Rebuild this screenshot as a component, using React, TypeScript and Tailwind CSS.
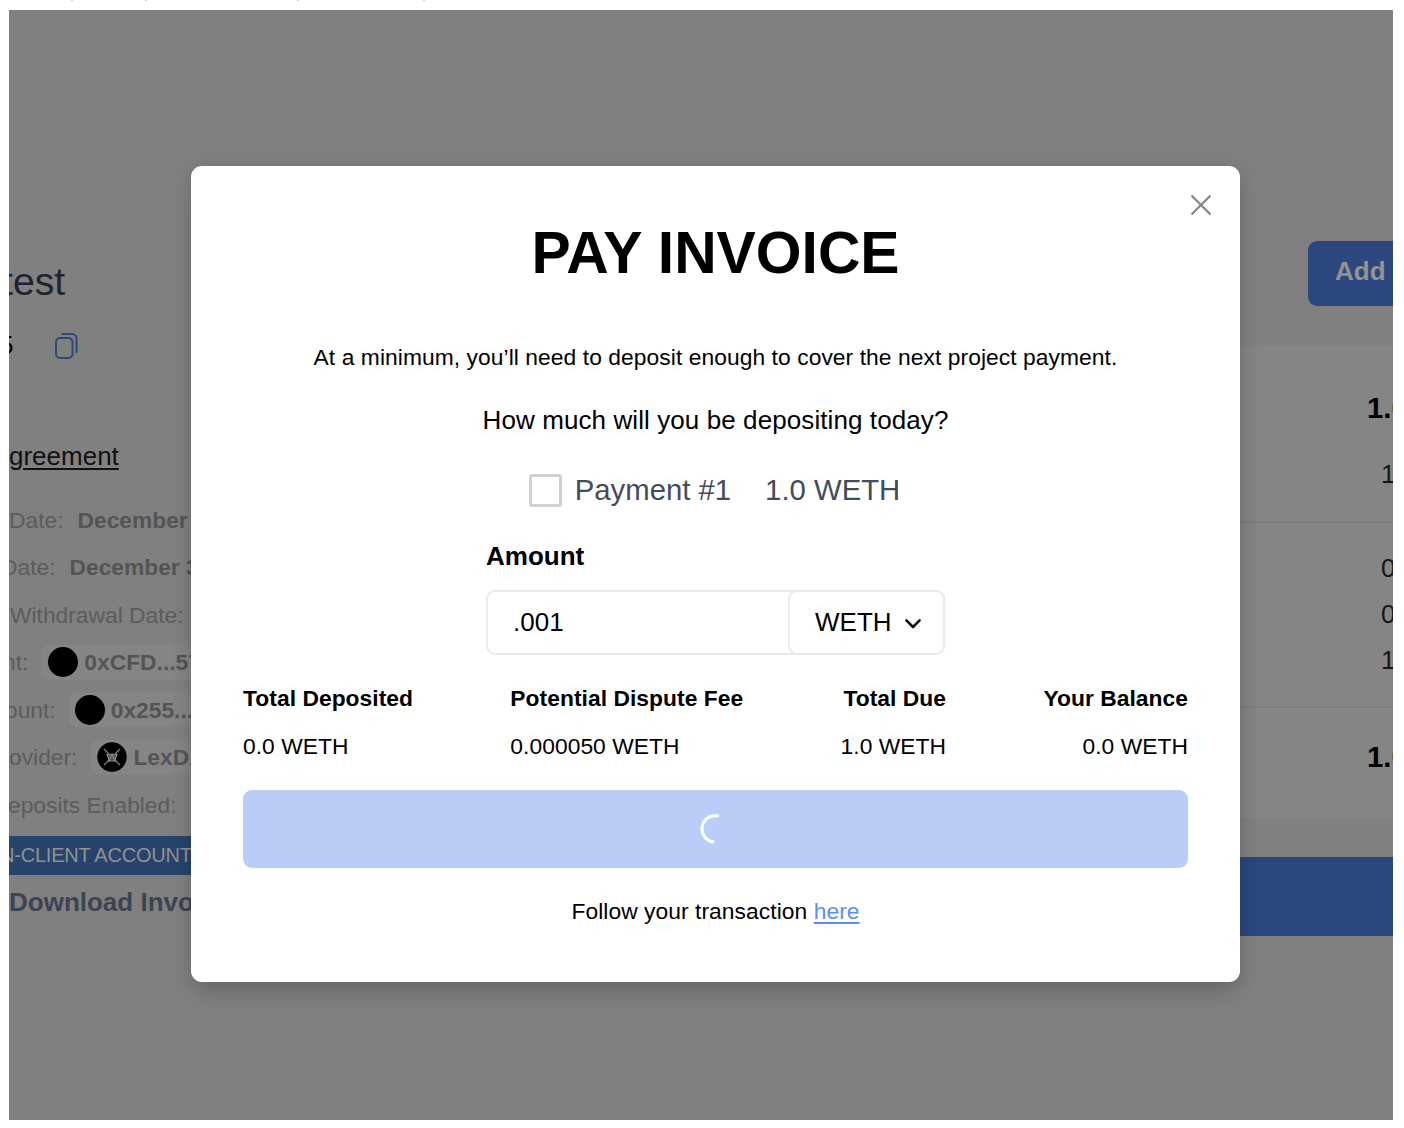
import React from "react";

const descenders = ["ml-[71px]", "ml-[72px]", "ml-[150px]", "ml-[124px]"];

function LexMark() {
  return (
    <svg viewBox="0 0 30 30" className="size-[30px] shrink-0">
      <circle cx="15" cy="15" r="14.7" fill="#000" />
      <g stroke="#858585" strokeWidth="1.2" fill="none">
        <path d="M7 7 23 23M23 7 7 23" />
        <path d="M10 12.5h10l-2.5 6.5h-5z" fill="#555" />
        <path d="M11.5 20 15 12l3.5 8" />
      </g>
    </svg>
  );
}

function DetailRow({ indent, label, children }: { indent: string; label: string; children?: React.ReactNode }) {
  return (
    <div className="flex h-[47.5px] items-center">
      <span className={indent}>{label}</span>
      {children}
    </div>
  );
}

function Pill({ icon, children, className }: { icon: React.ReactNode; children: string; className: string }) {
  return (
    <span className={`flex h-[35px] items-center gap-[6px] rounded-[7px] bg-[#858585] pl-[6px] pr-3 font-bold text-[#545454] ${className}`}>
      {icon}
      {children}
    </span>
  );
}

function Backdrop() {
  const dot = <span className="size-[30px] shrink-0 rounded-full bg-black" />;
  return (
    <div className="flex h-full justify-between">
      <div className="w-[400px] whitespace-nowrap pt-[247px]">
        <div className="-ml-[7px] h-[50px] text-[39.2px] leading-[50px] text-[#1f242e]">test</div>
        <div className="mt-[18px] flex h-10 items-center text-[26px] text-black">
          <span className="-ml-[10px]">5</span>
          <svg viewBox="0 0 24 28" className="ml-[41px] mt-px h-7 w-6" fill="none" stroke="#2b4a7a" strokeWidth="2">
            <rect x="2" y="6" width="16.5" height="20" rx="4" />
            <path d="M7.5 2h10.5a4.5 4.5 0 0 1 4.5 4.5v14.5" />
          </svg>
        </div>
        <div className="mt-[71px] h-10 text-[26px] leading-10 text-[#111] underline decoration-2 underline-offset-[3px]">greement</div>
        <div className="mt-[20px] text-[22.8px] text-[#5c5c5c]">
          <DetailRow indent="" label="Date:"><b className="ml-[14px] text-[#545454]">December 30</b></DetailRow>
          <DetailRow indent="-ml-[8px]" label="Date:"><b className="ml-[14px] text-[#545454]">December 31</b></DetailRow>
          <DetailRow indent="ml-px" label="Withdrawal Date:" />
          <DetailRow indent="-ml-[6px]" label="nt:"><Pill className="ml-[14px]" icon={dot}>0xCFD...57</Pill></DetailRow>
          <DetailRow indent="-ml-[4px]" label="ount:"><Pill className="ml-[13px]" icon={dot}>0x255...</Pill></DetailRow>
          <DetailRow indent="" label="ovider:"><Pill className="ml-[14px]" icon={<LexMark />}>LexDAO</Pill></DetailRow>
          <DetailRow indent="-ml-px" label="eposits Enabled:" />
        </div>
        <div className="mt-[7px] h-[39px] bg-[#27446a] text-[20px] leading-[39px] text-[#929292]">
          <span className="-ml-[9px] tracking-[-0.22px]">N-CLIENT ACCOUNT</span>
        </div>
        <div className="mt-[7px] h-10 text-[26px] font-bold leading-10 text-[#3b4453]">Download Invoice</div>
      </div>

      <div className="w-[400px] whitespace-nowrap pt-[231px]">
        <div className="ml-[315px] h-[65px] rounded-l-[9px] bg-[#2b477e] pl-[27px] text-[26px] font-bold leading-[61px] text-[#929292]">Add</div>
        <div className="mt-[39px] h-[473px] bg-[#858585] text-[26px] text-[#151515]">
          <div className="flex h-[178px] flex-col border-b-2 border-[#7b7e80] pt-[43px]">
            <b className="h-10 pl-[374px] text-[29.3px] leading-10 text-black">1.0</b>
            <span className="mt-[26px] pl-[388px] leading-10">1.0</span>
          </div>
          <div className="flex h-[185px] flex-col border-b-2 border-[#7d7d7d] pt-[22px] leading-[46px]">
            <span className="pl-[388px]">0.0</span>
            <span className="pl-[388px]">0.0</span>
            <span className="pl-[388px]">1.0</span>
          </div>
          <b className="block pl-[374px] pt-[29px] text-[29.3px] leading-10 text-black">1.0</b>
        </div>
        <div className="mt-[39px] h-[79px] bg-[#2b477e]" />
      </div>
    </div>
  );
}

const totals = [
  { label: "Total Deposited", value: "0.0 WETH", align: "" },
  { label: "Potential Dispute Fee", value: "0.000050 WETH", align: "" },
  { label: "Total Due", value: "1.0 WETH", align: "text-right" },
  { label: "Your Balance", value: "0.0 WETH", align: "text-right" },
];

function PayInvoiceDialog() {
  return (
    <div role="dialog" className="absolute left-[182px] top-[156px] flex h-[815.5px] w-[1049px] flex-col items-center rounded-[11px] bg-white pt-[52px] text-black shadow-[0_16px_24px_-5px_rgba(0,0,0,0.1),0_4px_20px_rgba(0,0,0,0.14)]">
      <button aria-label="Close" className="absolute right-[28px] top-[28px]">
        <svg viewBox="0 0 22 22" className="size-[22px]" stroke="#858585" strokeWidth="2.2" fill="none">
          <path d="M1.5 1.5 20.5 20.5M20.5 1.5 1.5 20.5" />
        </svg>
      </button>
      <h1 className="h-[70px] text-[58.8px] font-bold leading-[70px]">PAY INVOICE</h1>
      <p className="mt-[51px] h-9 text-[22.8px] leading-9 tracking-[0.07px]">At a minimum, you’ll need to deposit enough to cover the next project payment.</p>
      <p className="mt-[25px] h-10 text-[26px] leading-10 tracking-[0.09px]">How much will you be depositing today?</p>
      <div className="mt-8 flex h-9 items-center text-[29.3px] text-[#434c5a]">
        <span className="-ml-[2px] size-[33px] rounded-[3px] border-[3px] border-[#d0d0d0]" />
        <span className="ml-[13px]">Payment #1</span>
        <span className="ml-[34px]">1.0 WETH</span>
      </div>
      <div className="mt-[30px] w-[459px]">
        <label className="block h-9 text-[26px] font-bold leading-9">Amount</label>
        <div className="mt-4 flex h-[65px] rounded-[9px] border-2 border-[#e6ebf3] text-[26px]">
          <div className="flex flex-1 items-center pl-[25px]">.001</div>
          <div className="-my-[2px] -mr-[2px] flex w-[157px] items-center rounded-[9px] border-2 border-[#e6ebf3] bg-white pl-[25px]">
            WETH
            <svg viewBox="0 0 18 12" className="ml-[12px] mt-[2px] h-3 w-[18px]" fill="none" stroke="#111" strokeWidth="2.6" strokeLinecap="round" strokeLinejoin="round">
              <path d="m2.4 2.4 6.6 6.6 6.6-6.6" />
            </svg>
          </div>
        </div>
      </div>
      <div className="mt-[28px] flex w-[945px] justify-between text-[22.8px] leading-[30px] tracking-[0.05px]">
        {totals.map((t) => (
          <div key={t.label} className={t.align}>
            <div className="font-bold">{t.label}</div>
            <div className="mt-[18px]">{t.value}</div>
          </div>
        ))}
      </div>
      <div className="mt-[29px] flex h-[78px] w-[945px] items-center rounded-[9px] bg-[#b9cdf8]">
        <svg viewBox="0 0 32 32" className="ml-[456.5px] size-8" fill="none" stroke="#fff" strokeWidth="3.2" strokeLinecap="round">
          <path d="M17.5 2.8A13.2 13.2 0 0 0 13 28.9" />
        </svg>
      </div>
      <p className="mt-[27px] h-8 text-[22.8px] leading-8 tracking-[0.06px]">
        Follow your transaction <a className="text-[#5b8df5] underline decoration-2 underline-offset-[3px]">here</a>
      </p>
    </div>
  );
}

export default function App() {
  return (
    <div className="h-[1128px] w-[1404px] overflow-hidden bg-white font-['Liberation_Sans',Arial,sans-serif]">
      <div className="flex h-[10px]">
        {descenders.map((offset) => (
          <span key={offset} className={`h-px w-[2px] bg-[#d5d5d5] ${offset}`} />
        ))}
      </div>
      <div className="relative ml-[9px] h-[1110px] w-[1384px] overflow-hidden bg-[#808080]">
        <Backdrop />
        <PayInvoiceDialog />
      </div>
    </div>
  );
}
